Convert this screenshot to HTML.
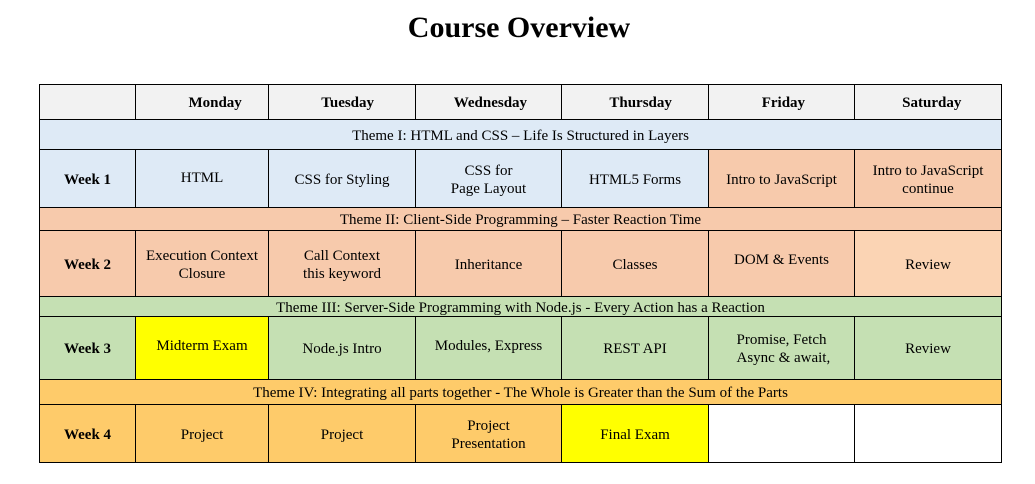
<!DOCTYPE html>
<html><head><meta charset="utf-8"><style>
body{margin:0;width:1035px;height:484px;background:#fff;position:relative;font-family:"Liberation Serif",serif;color:#000;overflow:hidden}
h1{position:absolute;left:0;width:1038px;top:11px;margin:0;text-align:center;font-size:30px;font-weight:bold}
.c{position:absolute;box-sizing:border-box;border:1px solid #000;display:flex;align-items:center;justify-content:center;text-align:center;font-size:15px;line-height:18px;padding-top:2px}
</style></head><body>
<h1>Course Overview</h1>
<div id="t"></div>
<script>
const X=[39,135,268,415,561,708,854,1001];
const H=[[84,120],[119,150],[149,208],[207,231],[230,297],[296,317],[316,380],[379,405],[404,463]];
const hdr='#f2f2f2',bl='#deeaf6',pe='#f7caac',gr='#c5e0b3',or='#fecb6a',ye='#ffff00';
const rows=[
 [0,[["",hdr],["<b>&nbsp;&nbsp;&nbsp;&nbsp;&nbsp;&nbsp;&nbsp;Monday</b>",hdr],["<b>&nbsp;&nbsp;&nbsp;Tuesday</b>",hdr],["<b>&nbsp;Wednesday</b>",hdr],["<b>&nbsp;&nbsp;&nbsp;Thursday</b>",hdr],["<b>&nbsp;Friday</b>",hdr],["<b>&nbsp;&nbsp;Saturday</b>",hdr]]],
 [1,"Theme I: HTML and CSS – Life Is Structured in Layers",bl],
 [2,[["<b>Week 1</b>",bl],["HTML",bl,-2],["CSS for Styling",bl],["CSS for<br>Page Layout",bl],["HTML5 Forms",bl],["Intro to JavaScript",pe],["Intro to JavaScript<br>continue",pe]]],
 [3,"Theme II: Client-Side Programming – Faster Reaction Time",pe],
 [4,[["<b>Week 2</b>",pe],["Execution Context<br>Closure",pe],["Call Context<br>this keyword",pe],["Inheritance",pe],["Classes",pe],["DOM &amp; Events",pe,-5],["Review",'#fbd4b4']]],
 [5,"Theme III: Server-Side Programming with Node.js - Every Action has a Reaction",gr],
 [6,[["<b>Week 3</b>",gr],["Midterm Exam",ye,-3],["Node.js Intro",gr],["Modules, Express",gr,-3],["REST API",gr],["Promise, Fetch<br>&nbsp;Async &amp; await,",gr],["Review",gr]]],
 [7,"Theme IV: Integrating all parts together - The Whole is Greater than the Sum of the Parts",or],
 [8,[["<b>Week 4</b>",or],["Project",or],["Project",or],["Project<br>Presentation",or],["Final Exam",ye],["","#fff"],["","#fff"]]]
];
let h='';
for(const r of rows){const [t,b]=H[r[0]];
 if(typeof r[1]=='string'){h+=`<div class="c" style="left:${X[0]}px;top:${t}px;width:${X[7]-X[0]+1}px;height:${b-t}px;background:${r[2]}">${r[1]}</div>`;}
 else r[1].forEach((c,i)=>{h+=`<div class="c" style="left:${X[i]}px;top:${t}px;width:${X[i+1]-X[i]+1}px;height:${b-t}px;background:${c[1]}"><span style="position:relative;top:${c[2]||0}px">${c[0]}</span></div>`;});
}
document.getElementById('t').innerHTML=h;
</script>
</body></html>
